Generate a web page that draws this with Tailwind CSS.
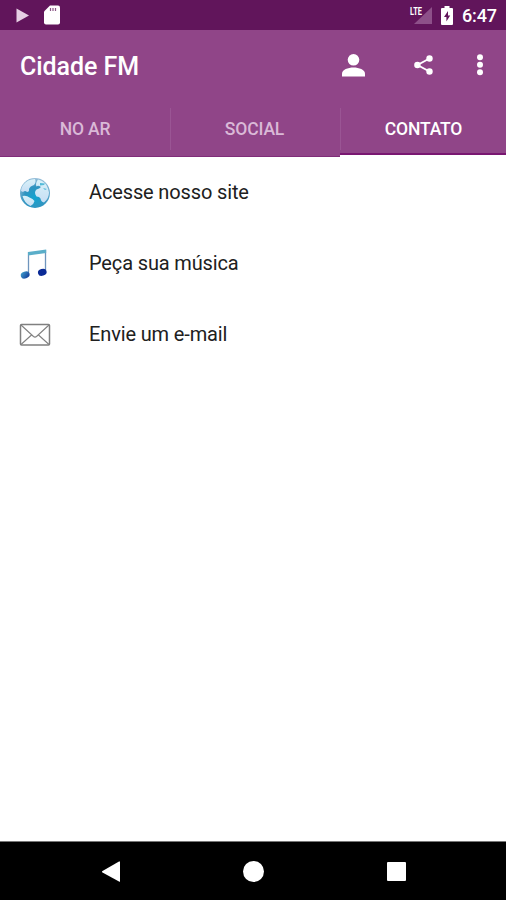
<!DOCTYPE html>
<html lang="pt-BR">
<head>
  <meta charset="UTF-8" />
  <meta name="viewport" content="width=device-width, initial-scale=1.0" />
  <title>Cidade FM</title>
  <script src="https://cdn.jsdelivr.net/npm/@tailwindcss/browser@4"></script>
</head>
<body class="bg-white font-[Roboto,sans-serif] h-screen flex flex-col overflow-hidden">
  <!-- Status bar -->
  <div class="h-[30px] shrink-0 bg-[#61155b] flex items-center pl-4 pr-[9px] text-white">
    <svg class="w-[13px] h-[15px]" viewBox="0 0 13 15"><path d="M.5 .5 13 7.500 .5 14.500z" fill="#e6cfe4" /></svg>
    <svg class="w-4 h-5 ml-[15px]" viewBox="0 0 16 20">
      <path d="M6 .5h8a2 2 0 0 1 2 2v15a2 2 0 0 1-2 2H2a2 2 0 0 1-2-2V6.500z" fill="#fff" />
      <path d="M6.500 3v3M9 3v3M11.500 3v3" stroke="#8b5687" stroke-width="1.200" />
    </svg>
    <svg class="w-[23px] h-5 ml-auto" viewBox="0 0 23 20">
      <path d="M23 2v17H5z" fill="#8d5089" />
      <path d="M0 1h13.500v9.500H0z" fill="#61155b" />
      <text x="1" y="9.500" fill="#fff" font-size="10.500" font-weight="700" textLength="12" lengthAdjust="spacingAndGlyphs">LTE</text>
    </svg>
    <svg class="w-3 h-[19px] ml-[9px]" viewBox="0 0 12 19">
      <path d="M3.500 0h5v2H11a1 1 0 0 1 1 1v15a1 1 0 0 1-1 1H1a1 1 0 0 1-1-1V3a1 1 0 0 1 1-1h2.500z" fill="#fff" />
      <path d="M7 5 3 11h2.400v4.500L9.200 9.500H7z" fill="#61155b" />
    </svg>
    <span class="ml-[9px] text-[18px] leading-none font-medium -tracking-[.1px] pt-px">6:47</span>
  </div>

  <header class="shrink-0 bg-[#904588]">
    <!-- Toolbar -->
    <div class="h-[70px] flex items-center pl-5 pr-[22px] text-white">
      <h1 class="text-[25px] leading-none font-medium tracking-[-.06px] pt-0.5">Cidade FM</h1>
      <svg class="w-[23px] h-[23px] ml-auto" viewBox="0 0 23 23" fill="#fff">
        <circle cx="11.500" cy="5.800" r="5.800" />
        <path d="M0 22.500v-3c0-3.700 6-6 11.500-6s11.500 2.300 11.500 6v3z" />
      </svg>
      <svg class="w-[19px] h-5 ml-[49px]" viewBox="0 0 19 20">
        <path d="M15.500 3.500 3.500 10l12 6.500" fill="none" stroke="#fff" stroke-width="1.900" />
        <g fill="#fff"><circle cx="15.500" cy="3.500" r="3.200" /><circle cx="3.400" cy="10" r="3.200" /><circle cx="15.500" cy="16.500" r="3.200" /></g>
      </svg>
      <svg class="w-2 h-[22px] ml-[43px]" viewBox="0 0 8 22" fill="#fff">
        <circle cx="4" cy="3.300" r="3" /><circle cx="4" cy="10.800" r="3" /><circle cx="4" cy="18.300" r="3" />
      </svg>
    </div>

    <!-- Tabs -->
    <nav class="h-[57px] flex text-[17.5px] leading-none font-medium tracking-[-.15px] text-[#dab9d7] bg-white">
      <div class="w-[170px] bg-[#904588] border-b border-[#802d79] flex items-center justify-center pt-1">NO AR</div>
      <div class="w-[170px] bg-[#904588] border-b border-[#802d79] flex items-center pt-0.5">
        <div class="h-[42px] w-full border-l border-[#9a5594] flex items-center justify-center pt-0.5 pr-0.5">SOCIAL</div>
      </div>
      <div class="w-[166px] h-[55px] bg-[#904588] border-b-2 border-[#791671] flex items-center pt-1 text-white">
        <div class="h-[42px] w-full border-l border-[#9a5594] flex items-center justify-center pt-0.5">CONTATO</div>
      </div>
    </nav>
  </header>

  <main class="flex-1 text-[20px] leading-none text-[#202020]">
    <a class="h-[71px] flex items-center pl-[19px] pt-px">
      <svg class="w-8 h-8" viewBox="0 0 32 32">
        <defs>
          <radialGradient id="sea" cx=".5" cy=".65" r=".65"><stop offset="0" stop-color="#12a4d0" /><stop offset=".55" stop-color="#3094c0" /><stop offset="1" stop-color="#9cc0da" /></radialGradient>
          <linearGradient id="land" x1="0" y1="0" x2="0" y2="1"><stop offset="0" stop-color="#d8f2f9" /><stop offset="1" stop-color="#c8def4" /></linearGradient>
        </defs>
        <circle cx="16" cy="16" r="15" fill="url(#sea)" />
        <!-- North America, Europe and Africa, South America -->
        <path d="M4 8C7 4 11 2 16 2q1.500 3-1 6-4 1-5 4 .5 3-2 3-2-2-4 0l-2-1q0-3 2-6z" fill="url(#land)" />
        <path d="M19 2.500q8 2 10 9l1 4q0 6-5 10-3-.5-3.500-4-1-2-4-2-3-4 0-7 3-1 4.500-2.500-3-2-4.500-.5-1.500-3 1.500-7z" fill="url(#land)" />
        <path d="M3.500 19q4-1 7 1.500 3.500 1 5 3.500-.5 3-4 5-6-2.500-8-10z" fill="url(#land)" />
        <path d="m21 6 5 .5-1 1.500-4 .5zM24 11l4 1-2 1z" fill="#53bbd9" />
      </svg>
      <span class="ml-[38px] -mt-0.5 tracking-[-.14px]">Acesse nosso site</span>
    </a>
    <a class="h-[71px] flex items-center pl-[19px] pt-px">
      <svg class="w-8 h-8" viewBox="0 0 32 32">
        <defs>
          <linearGradient id="note" x1="0" y1="0" x2="1" y2="1"><stop offset="0" stop-color="#43a5cf" /><stop offset="1" stop-color="#0b2f93" /></linearGradient>
        </defs>
        <path d="M9.500 4v22M26.500 2v21" stroke="#6f95bd" stroke-width="1.300" />
        <path d="M9 4 27.200 1.500v3.500L9 7.500z" fill="#5aaec9" />
        <ellipse cx="6.200" cy="27" rx="4.500" ry="3.400" transform="rotate(-18 6.200 27)" fill="url(#note)" />
        <ellipse cx="23.300" cy="24.300" rx="4.400" ry="3.400" transform="rotate(-18 23.300 24.300)" fill="#0a2a96" />
      </svg>
      <span class="ml-[38px] -mt-0.5 tracking-[-.14px]">Peça sua música</span>
    </a>
    <a class="h-[71px] flex items-center pl-[19px] pt-px">
      <svg class="w-8 h-6" viewBox="0 0 32 24" fill="none" stroke="#808080" stroke-width="1.100">
        <rect x="1.500" y="1.500" width="29" height="20.500" rx="1" stroke-width="1.500" />
        <path d="m2 2 12.500 11.500q1.500 1.300 3 0L30 2M2 21.500l10.500-9.500M30 21.500 19.500 12" />
      </svg>
      <span class="ml-[38px] -mt-0.5 tracking-[-.14px]">Envie um e-mail</span>
    </a>
  </main>

  <!-- Navigation bar -->
  <footer class="h-[59px] shrink-0 bg-black border-t border-[#777] flex items-center pl-[102px]">
    <svg class="w-[18px] h-[21px]" viewBox="0 0 18 21"><path d="M18 .5v20q0 .5-1 0L.5 11.500q-1-.8 0-1.500L17 .5z" fill="#fff" /></svg>
    <div class="size-[21px] ml-[123px] rounded-full bg-white"></div>
    <div class="size-[19px] ml-[122.500px] rounded-[1px] bg-white"></div>
  </footer>
</body>
</html>
